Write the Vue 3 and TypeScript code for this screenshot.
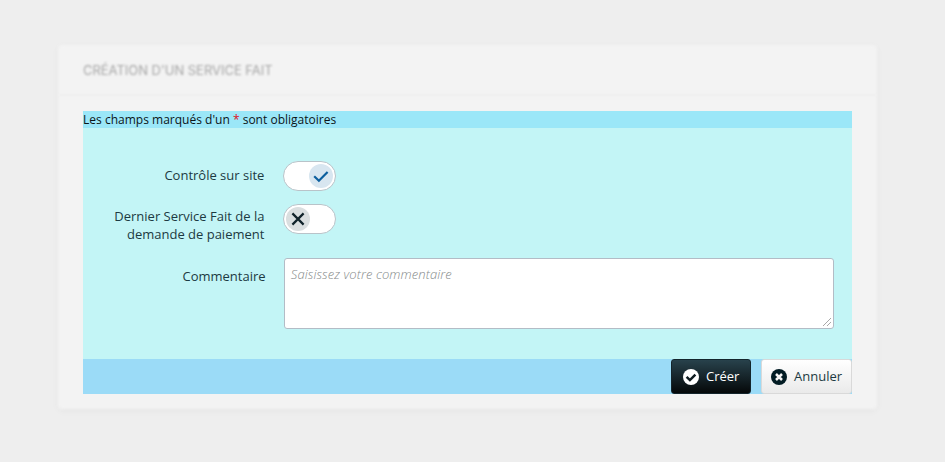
<script setup lang="ts">
import { ref } from 'vue'

const onSiteCheck = ref(true)
const lastService = ref(false)
const comment = ref('')

function reset(): void {
  onSiteCheck.value = false
  lastService.value = false
  comment.value = ''
}
</script>

<template>
  <main class="page">
    <section class="card">
      <header class="card-header">
        <h1>CRÉATION D'UN SERVICE FAIT</h1>
      </header>
      <form class="form" @submit.prevent>
        <p class="notice">Les champs marqués d'un <span class="star">*</span> sont obligatoires</p>
        <div class="fields">
          <div class="row row-site">
            <span class="label label-site">Contrôle sur site</span>
            <button type="button" class="switch" :class="{ on: onSiteCheck }" role="switch" :aria-checked="onSiteCheck" @click="onSiteCheck = !onSiteCheck">
              <span class="knob">
                <svg v-if="onSiteCheck" viewBox="0 0 24 24"><path d="M5.2 12.2 9.9 16.8 18.6 8" /></svg>
                <svg v-else viewBox="0 0 24 24"><path d="M6.4 6.4 17.6 17.6M17.6 6.4 6.4 17.6" /></svg>
              </span>
            </button>
          </div>
          <div class="row row-last">
            <span class="label label-last">Dernier Service Fait de la<br />demande de paiement</span>
            <button type="button" class="switch" :class="{ on: lastService }" role="switch" :aria-checked="lastService" @click="lastService = !lastService">
              <span class="knob">
                <svg v-if="lastService" viewBox="0 0 24 24"><path d="M5.2 12.2 9.9 16.8 18.6 8" /></svg>
                <svg v-else viewBox="0 0 24 24"><path d="M6.4 6.4 17.6 17.6M17.6 6.4 6.4 17.6" /></svg>
              </span>
            </button>
          </div>
          <div class="row row-comment">
            <label class="label label-comment" for="comment">Commentaire</label>
            <textarea id="comment" v-model="comment" placeholder="Saisissez votre commentaire"></textarea>
          </div>
        </div>
        <footer class="actions">
          <button type="submit" class="btn primary">
            <svg viewBox="0 0 16 16"><circle cx="8" cy="8" r="8" /><path d="M3.6 7.9 6.9 11.1 12.4 5.6" /></svg>
            <span>Créer</span>
          </button>
          <button type="button" class="btn secondary" @click="reset">
            <svg viewBox="0 0 16 16"><circle cx="8" cy="8" r="8" /><path d="M5 5 11 11M11 5 5 11" /></svg>
            <span>Annuler</span>
          </button>
        </footer>
      </form>
    </section>
  </main>
</template>

<style>
body {
  background: #eee;
}
</style>

<style scoped>
.page {
  box-sizing: border-box;
  height: 462px;
  padding: 45px 68px 0 58px;
  overflow: hidden;
  background: #eee;
  font-family: 'Open Sans', sans-serif;
  font-size: 13px;
  font-weight: 400;
  color: #1c3a42;
}
.card {
  position: relative;
  box-sizing: border-box;
  height: 364px;
}
.card::before {
  content: '';
  position: absolute;
  inset: 0;
  background: #f3f3f3;
  border-radius: 4px;
  box-shadow: 0 2px 7px rgba(0, 0, 0, 0.04);
  filter: blur(1.5px);
}
.card-header {
  position: relative;
  box-sizing: border-box;
  height: 51px;
  padding: 17px 25px 0;
  border-bottom: 2px solid #efefef;
  filter: blur(1px);
}
.card-header h1 {
  margin: 0;
  font: 400 13px/17px Inter, sans-serif;
  letter-spacing: -0.03px;
  color: #a6a6a6;
  white-space: nowrap;
}
.form {
  position: relative;
  width: 769px;
  margin: 15px 0 0 25px;
}
.notice {
  height: 17px;
  margin: 0;
  line-height: 17px;
  font-size: 12px;
  letter-spacing: 0.01px;
  color: #0c1518;
  background: #9be7f8;
  white-space: nowrap;
}
.star {
  color: #e01020;
}
.fields {
  box-sizing: border-box;
  height: 231px;
  padding: 33px 18px 0 0;
  background: #c3f5f6;
}
.row {
  display: flex;
  align-items: flex-start;
}
.row-site {
  height: 42.7px;
}
.row-last {
  height: 54.3px;
}
.label {
  box-sizing: border-box;
  width: 181.4px;
  margin-right: 18.2px;
  flex: none;
  text-align: right;
  line-height: 18px;
  white-space: nowrap;
}
.label-site {
  padding-top: 5px;
}
.label-last {
  padding-top: 3px;
}
.label-comment {
  width: 182.6px;
  padding-top: 9px;
}
.switch {
  display: flex;
  box-sizing: border-box;
  width: 53.5px;
  height: 30px;
  padding: 2px;
  border: 1px solid #b9c3c9;
  border-radius: 15px;
  background: #fff;
}
.switch.on {
  justify-content: flex-end;
}
.knob {
  width: 24px;
  height: 24px;
  border-radius: 50%;
  background: #dadfe0;
}
.knob svg {
  display: block;
  width: 24px;
  height: 24px;
  fill: none;
  stroke: #10232a;
  stroke-width: 2.2;
}
.switch.on .knob {
  background: #d8e6f0;
}
.switch.on svg {
  stroke: #0d5f9e;
}
textarea {
  box-sizing: border-box;
  width: 550px;
  height: 71px;
  margin: 0;
  padding: 6px;
  border: 1px solid #b3bcc6;
  border-radius: 3px;
  outline: none;
  resize: both;
  background: #fff;
  font: 400 13px/18px 'Open Sans', sans-serif;
  color: #102a32;
}
textarea::placeholder {
  font-weight: 350;
  font-style: italic;
  letter-spacing: 0.1px;
  color: #868b8b;
}
textarea::-webkit-resizer {
  background:
    linear-gradient(135deg, transparent 49%, #a8a8a8 49%, #a8a8a8 55%, transparent 55%, transparent 69%, #a8a8a8 69%, #a8a8a8 76%, transparent 76%)
    5px 5px / 8px 8px no-repeat;
}
.actions {
  display: flex;
  justify-content: flex-end;
  gap: 10px;
  height: 35px;
  background: #9bdbf7;
}
.btn {
  display: flex;
  align-items: center;
  box-sizing: border-box;
  height: 35px;
  gap: 7px;
  border-radius: 3px;
  font: 400 13px/18px 'Open Sans', sans-serif;
  white-space: nowrap;
}
.btn span {
  padding-bottom: 1px;
}
.btn svg {
  flex: none;
  width: 16px;
  height: 16px;
  stroke-width: 2.5;
}
.btn path {
  fill: none;
}
.primary {
  width: 80px;
  padding: 0 0 0 11px;
  border: 1px solid #14252c;
  background: linear-gradient(#28424c, #050809);
  color: #fff;
}
.primary circle {
  fill: #fff;
}
.primary path {
  stroke: #0f1c21;
}
.secondary {
  width: 91px;
  padding: 0 0 0 9px;
  border: 1px solid #d9d9d9;
  background: linear-gradient(#fff, #eaeaea);
  color: #1c3a42;
}
.secondary circle {
  fill: #021c24;
}
.secondary path {
  stroke: #f6f6f6;
}
</style>
